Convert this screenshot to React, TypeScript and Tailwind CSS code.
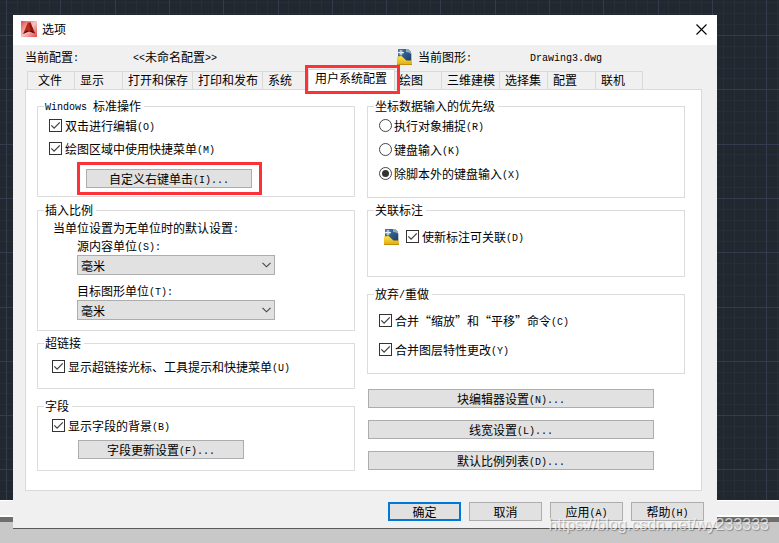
import { useState } from 'react';
import type { ReactNode } from 'react';

const TABS = [
  '文件', '显示', '打开和保存', '打印和发布', '系统', '用户系统配置',
  '绘图', '三维建模', '选择集', '配置', '联机',
];

// Latin runs are set in a half-width monospace face next to the full-width Chinese glyphs
function Txt({ children }: { children: string }) {
  return (
    <>
      {children.split(/([\x20-\x7e]+)/).map((part, i) =>
        i % 2 ? (
          <span key={i} className="align-[1px] font-['Liberation_Mono',monospace] text-[10px] leading-none whitespace-pre">{part}</span>
        ) : (
          part
        ),
      )}
    </>
  );
}

function Group({ title, className, children }: { title: string; className: string; children: ReactNode }) {
  return (
    <fieldset className={`min-w-0 border border-[#dcdcdc] ${className}`}>
      <legend className="ml-[6px] h-[17px] px-px pr-[3px] leading-[15px]"><Txt>{title}</Txt></legend>
      {children}
    </fieldset>
  );
}

function Check({ label, className = '' }: { label: string; className?: string }) {
  return (
    <label className={`flex h-[17px] items-center gap-[3px] ${className}`}>
      <span className="grid shrink-0 place-items-center">
        <input type="checkbox" defaultChecked className="peer col-start-1 row-start-1 size-[13px] appearance-none border border-[#333] bg-white" />
        <svg viewBox="0 0 13 13" className="pointer-events-none invisible col-start-1 row-start-1 size-[13px] peer-checked:visible">
          <path d="M2.3 6.4 5.1 9.2 10.8 3.4" fill="none" stroke="#444" strokeWidth="1.3" />
        </svg>
      </span>
      <span className="whitespace-nowrap"><Txt>{label}</Txt></span>
    </label>
  );
}

function Radio({ label, checked = false }: { label: string; checked?: boolean }) {
  return (
    <label className="flex h-[17px] items-center gap-[2px]">
      <span className="grid shrink-0 place-items-center">
        <input type="radio" name="priority" defaultChecked={checked} className="peer col-start-1 row-start-1 size-[13px] appearance-none rounded-full border border-[#444] bg-white" />
        <span className="pointer-events-none invisible col-start-1 row-start-1 size-[7px] rounded-full bg-[#333] peer-checked:visible" />
      </span>
      <span className="whitespace-nowrap"><Txt>{label}</Txt></span>
    </label>
  );
}

function UnitSelect({ id, label, className }: { id: string; label: string; className: string }) {
  return (
    <div className={`ml-[39px] w-[198px] ${className}`}>
      <label htmlFor={id} className="block h-[17px] leading-[15px]"><Txt>{label}</Txt></label>
      <div className="grid items-center">
        <select id={id} className="col-start-1 row-start-1 h-5 w-full appearance-none border border-[#adadad] bg-[#e1e1e1] pl-[3px] leading-[17px]">
          <option>毫米</option>
          <option>厘米</option>
          <option>英寸</option>
        </select>
        <svg viewBox="0 0 9 6" className="pointer-events-none col-start-1 row-start-1 mr-1 h-[6px] w-[9px] justify-self-end">
          <path d="M.5 .8 4.5 4.8 8.5 .8" fill="none" stroke="#444" strokeWidth="1.1" />
        </svg>
      </div>
    </div>
  );
}

function Button({ children, className = '', primary = false }: { children: string; className?: string; primary?: boolean }) {
  return (
    <button
      type="button"
      className={`flex h-[19px] items-center justify-center bg-[#e1e1e1] leading-[17px] whitespace-nowrap hover:bg-[#e5f1fb] ${primary ? 'border-2 border-[#0078d7]' : 'border border-[#adadad]'} ${className}`}
    >
      <span className="pb-px"><Txt>{children}</Txt></span>
    </button>
  );
}

function DrawingIcon() {
  return (
    <svg viewBox="0 0 16 16" className="size-4 shrink-0">
      <defs>
        <linearGradient id="page" x1="0" y1="0" x2="1" y2="1">
          <stop offset="0" stopColor="#4b7ba8" />
          <stop offset="1" stopColor="#173a66" />
        </linearGradient>
        <linearGradient id="folder" x1="0" y1="0" x2="0" y2="1">
          <stop offset="0" stopColor="#ffe34a" />
          <stop offset="1" stopColor="#e0a90a" />
        </linearGradient>
      </defs>
      <path d="M1 0h9.5Q14 1.5 14.3 5v8H1z" fill="url(#page)" />
      <path d="M9 0h2q3 1.5 3.3 5Q12 3 9 3z" fill="#8fa9c2" />
      <path d="M0 7.5 4.5 7l5 4.5H15V16H0z" fill="url(#folder)" />
      <path d="M0 15.5h15" stroke="#c0900c" />
      <path d="M4 1v5.4M1.2 3.6h5.6" stroke="#fff" strokeWidth="1.1" />
      <path d="M2.2 1.8l3.6 3.6M5.8 1.8 2.2 5.4" stroke="#c9dae9" strokeWidth=".7" />
    </svg>
  );
}

function AppIcon() {
  return (
    <svg viewBox="0 0 16 16" className="size-4 shrink-0">
      <defs>
        <linearGradient id="appBg" x1="0" y1="0" x2="1" y2="1">
          <stop offset="0" stopColor="#e0474a" />
          <stop offset=".5" stopColor="#f8c4c2" />
          <stop offset="1" stopColor="#e0474a" />
        </linearGradient>
      </defs>
      <path d="M0 0h16v16H0z" fill="url(#appBg)" />
      <path d="M6.8 1.5h2.6L14 12.4l-3.8-1.6L8 9.6l-2.4 1.6L2 13z" fill="#bb2a17" />
      <path d="M8.2 1.5h1.2L14 12.4l-3.6-1.6L8.8 6z" fill="#8e170d" />
      <path d="M2 13l3-3.2 5.4-.4 3.6 3-3.8-1.2L8 10.6l-2.6 1z" fill="#5a0f0a" />
    </svg>
  );
}

// Empty drawing area: every fifth grid line is a major one
function DrawingGrid() {
  const lines = Array.from({ length: 180 }, (_, i) => i);
  // minor lines first, so that the major ones stay unbroken
  const ordered = [...lines.filter(i => i % 5), ...lines.filter(i => i % 5 === 0)];
  return (
    <svg className="min-h-0 w-full flex-1 bg-[#212830]" shapeRendering="crispEdges">
      {ordered.map(i => {
        const x = Math.round(6 + (i - 5) * 10.86) + 0.5;
        const y = Math.round(35 + (i - 5) * 10.86) + 0.5;
        const color = i % 5 ? '#262e3a' : '#333b4d';
        return (
          <g key={i}>
            <line x1={x} x2={x} y1="0" y2="100%" stroke={color} />
            <line x1="0" x2="100%" y1={y} y2={y} stroke={color} />
          </g>
        );
      })}
    </svg>
  );
}

export default function App() {
  const [tab, setTab] = useState('用户系统配置');

  return (
    <div lang="zh-CN" className="relative min-h-screen overflow-hidden pt-[15px] pb-[14px] pl-3 pr-[62px] font-['Noto_Sans_CJK_SC','Liberation_Sans',sans-serif] text-xs text-black">
      {/* CAD window behind the dialog */}
      <div className="absolute inset-0 flex flex-col">
        <DrawingGrid />
        <div className="h-[17px] border-t border-b-2 border-white bg-[#f0f0f0]" />
        <div className="h-[5px] bg-[#6e6e6e]" />
        <div className="h-[21px] bg-[#c8c8c8]" />
      </div>

      <div role="dialog" aria-labelledby="dialog-title" className="relative ml-px bg-[#f0f0f0] shadow-[0_1px_0_#5a5a5a]">
        {/* Title bar */}
        <div className="flex h-[30px] items-center bg-white pr-[10px] pb-[2px] pl-2">
          <AppIcon />
          <h2 id="dialog-title" className="ml-[5px] flex-1">选项</h2>
          <button type="button" aria-label="关闭" className="hover:bg-gray-200">
            <svg viewBox="0 0 11 11" className="size-[11px]">
              <path d="M.5 .5l10 10M10.5 .5l-10 10" stroke="#000" strokeWidth="1.1" />
            </svg>
          </button>
        </div>

        {/* Current profile and drawing */}
        <div className="flex h-6 items-center pl-3 whitespace-nowrap">
          <span className="w-[108px]"><Txt>当前配置:</Txt></span>
          <span className="w-[264px]"><Txt>{'<<未命名配置>>'}</Txt></span>
          <DrawingIcon />
          <span className="ml-[5px] w-[112px]"><Txt>当前图形:</Txt></span>
          <span><Txt>Drawing3.dwg</Txt></span>
        </div>

        {/* Tabs */}
        <div role="tablist" className="flex h-5 items-end pl-[14px]">
          {TABS.map((name, i) => {
            const selected = name === tab;
            return (
              <button
                key={name}
                type="button"
                role="tab"
                aria-selected={selected}
                onClick={() => setTab(name)}
                className={`shrink-0 border-t border-l border-[#d9d9d9] text-left whitespace-nowrap ${
                  selected
                    ? 'relative z-10 -mx-[2px] -mb-px h-[21px] border-r bg-white pr-[7px] pb-1 pl-[6px]'
                    : `h-[18px] pr-1 pb-px leading-4 ${i === 0 ? 'w-[47px] pl-[10px]' : 'min-w-12 pl-[5px]'} ${i === TABS.length - 1 ? 'border-r' : ''}`
                }`}
              >
                {name}
                {selected && <span className="absolute -top-[5px] -right-[6px] -bottom-1 -left-1 border-3 border-[#fb3238]" />}
              </button>
            );
          })}
        </div>

        <div role="tabpanel" className="mr-[15px] ml-3 flex gap-3 border border-[#d9d9d9] bg-white pt-2 pr-4 pb-[19px] pl-[11px]">
          <div className="min-w-0 flex-1">
            <Group title="Windows 标准操作" className="pb-px">
              <div className="flex flex-col gap-[6px] pt-[2px] pl-[11px]">
                <Check label="双击进行编辑(O)" />
                <Check label="绘图区域中使用快捷菜单(M)" />
              </div>
              <div className="mt-[5px] ml-[39px] w-[185px] border-3 border-[#fb3238] px-[6px] py-1">
                <Button className="w-[166px]">自定义右键单击(I)...</Button>
              </div>
            </Group>

            <Group title="插入比例" className="mt-[5px] pb-[10px]">
              <p className="mt-px ml-[15px] h-[17px] leading-[15px]"><Txt>当单位设置为无单位时的默认设置:</Txt></p>
              <UnitSelect id="source-unit" label="源内容单位(S):" className="mt-px" />
              <UnitSelect id="target-unit" label="目标图形单位(T):" className="mt-2" />
            </Group>

            <Group title="超链接" className="mt-1 pb-[13px]">
              <Check label="显示超链接光标、工具提示和快捷菜单(U)" className="mt-[6px] ml-[14px]" />
            </Group>

            <Group title="字段" className="mt-[9px] pb-[11px]">
              <Check label="显示字段的背景(B)" className="mt-[2px] ml-[14px]" />
              <Button className="mt-[6px] ml-10 w-[166px]">字段更新设置(F)...</Button>
            </Group>
          </div>

          <div className="min-w-0 flex-1">
            <Group title="坐标数据输入的优先级" className="pb-[15px]">
              <div className="flex flex-col gap-[7px] pt-[2px] pl-[11px]">
                <Radio label="执行对象捕捉(R)" />
                <Radio label="键盘输入(K)" />
                <Radio label="除脚本外的键盘输入(X)" checked />
              </div>
            </Group>

            <Group title="关联标注" className="mt-1 pb-[31px]">
              <div className="mt-[9px] flex h-[17px] items-center gap-[6px] pl-4">
                <DrawingIcon />
                <Check label="使新标注可关联(D)" />
              </div>
            </Group>

            <Group title="放弃/重做" className="mt-[9px] pb-[15px]">
              <div className="flex flex-col gap-3 pt-[9px] pl-[11px]">
                <Check label="合并“缩放”和“平移”命令(C)" />
                <Check label="合并图层特性更改(Y)" />
              </div>
            </Group>

            <div className="mt-[15px] mr-[31px] ml-px flex flex-col gap-3">
              <Button>块编辑器设置(N)...</Button>
              <Button>线宽设置(L)...</Button>
              <Button>默认比例列表(D)...</Button>
            </div>
          </div>
        </div>

        {/* Footer */}
        <div className="flex justify-end gap-2 pt-[11px] pr-[13px] pb-[7px]">
          <Button primary className="w-[73px]">确定</Button>
          <Button className="w-[73px]">取消</Button>
          <Button className="w-[73px]">应用(A)</Button>
          <Button className="w-[73px]">帮助(H)</Button>
        </div>
      </div>

      <span className="pointer-events-none absolute right-[10px] bottom-[6px] font-['Liberation_Sans',sans-serif] text-base text-white/70 [text-shadow:1px_1px_1px_rgb(0_0_0/0.3)]">
        https://blog.csdn.net/wy233333
      </span>
    </div>
  );
}
